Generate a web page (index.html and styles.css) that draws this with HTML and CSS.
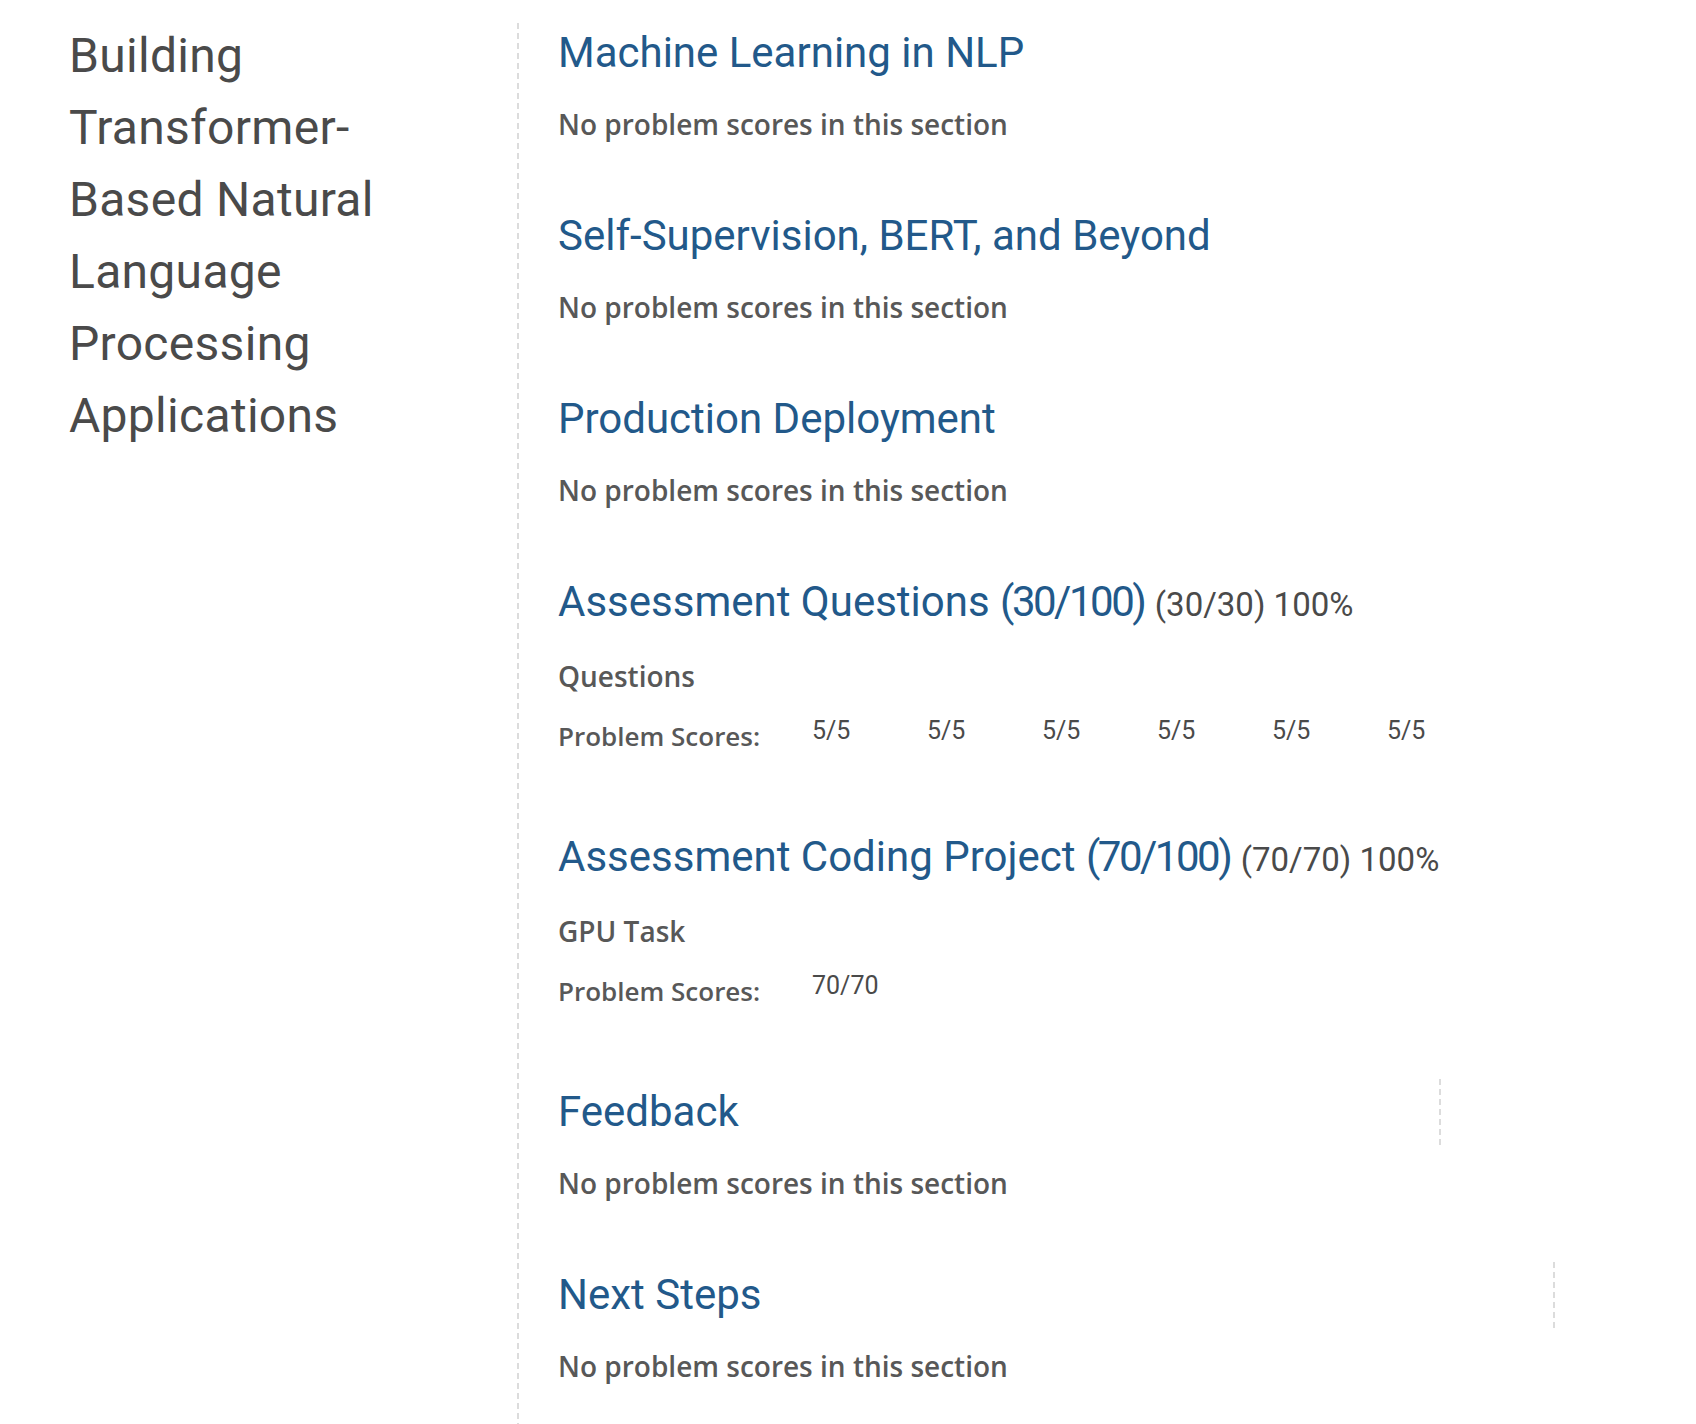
FILE: index.html
```html
<!DOCTYPE html>
<html lang="en">
<head>
<meta charset="utf-8">
<title>Progress</title>
<link rel="stylesheet" href="styles.css">
</head>
<body>
<div class="page">
  <aside class="course">
    <h1 class="course-title">Building Transformer-Based Natural Language Processing Applications</h1>
  </aside>
  <main class="chapters">
    <section class="chapter">
      <h2 class="chapter-title">Machine Learning in NLP</h2>
      <p class="chapter-note">No problem scores in this section</p>
    </section>
    <section class="chapter">
      <h2 class="chapter-title">Self-Supervision, BERT, and Beyond</h2>
      <p class="chapter-note">No problem scores in this section</p>
    </section>
    <section class="chapter">
      <h2 class="chapter-title">Production Deployment</h2>
      <p class="chapter-note">No problem scores in this section</p>
    </section>
    <section class="chapter">
      <h2 class="chapter-title">Assessment Questions <span class="chapter-points">(30/100)</span> <span class="chapter-score">(30/30) 100%</span></h2>
      <p class="chapter-note">Questions</p>
      <div class="scores">
        <span class="scores-label">Problem Scores:</span>
        <span class="score">5/5</span>
        <span class="score">5/5</span>
        <span class="score">5/5</span>
        <span class="score">5/5</span>
        <span class="score">5/5</span>
        <span class="score">5/5</span>
      </div>
    </section>
    <section class="chapter">
      <h2 class="chapter-title">Assessment Coding Project <span class="chapter-points">(70/100)</span> <span class="chapter-score">(70/70) 100%</span></h2>
      <p class="chapter-note">GPU Task</p>
      <div class="scores">
        <span class="scores-label">Problem Scores:</span>
        <span class="score">70/70</span>
      </div>
    </section>
    <section class="chapter">
      <h2 class="chapter-title chapter-title--ruled-a">Feedback</h2>
      <p class="chapter-note">No problem scores in this section</p>
    </section>
    <section class="chapter">
      <h2 class="chapter-title chapter-title--ruled-b">Next Steps</h2>
      <p class="chapter-note">No problem scores in this section</p>
    </section>
  </main>
</div>
</body>
</html>
```
FILE: styles.css
```css
* { box-sizing: border-box; }
html, body { margin: 0; padding: 0; background: #ffffff; }
body { font-family: "Open Sans", "Liberation Sans", sans-serif; }

.page {
  display: flex;
  align-items: stretch;
  min-height: 100vh;
  padding: 20px 0 0 69px;
}

.course {
  width: 448px;
  flex: none;
}

.course-title {
  margin: 0;
  width: 400px;
  font-family: Roboto, "Liberation Sans", sans-serif;
  font-weight: 400;
  font-size: 48px;
  line-height: 72px;
  letter-spacing: 0.3px;
  color: #4a4a4a;
}

.chapters {
  flex: 1;
  padding: 0 0 0 41px;
  background-image: repeating-linear-gradient(to bottom, #dcdcdc 0, #dcdcdc 6px, transparent 6px, transparent 10px);
  background-size: 2px 100%;
  background-repeat: no-repeat;
  background-position: 0 3px;
}

.chapter { margin: 0 0 61px 0; }

.chapter-title {
  margin: 0;
  font-family: Roboto, "Liberation Sans", sans-serif;
  font-weight: 400;
  font-size: 42px;
  line-height: 66px;
  color: #22598a;
}

.chapter-points { letter-spacing: -2.5px; }

.chapter-score {
  font-size: 33px;
  color: #4a4a4a;
}

.chapter-title--ruled-a,
.chapter-title--ruled-b {
  background-image: repeating-linear-gradient(to bottom, #dcdcdc 0, #dcdcdc 6px, transparent 6px, transparent 10px);
  background-size: 2px 100%;
  background-repeat: no-repeat;
  background-position: right top;
}
.chapter-title--ruled-a { width: 883px; }
.chapter-title--ruled-b { width: 997px; }

.chapter-note {
  margin: 20px 0 0 0;
  font-size: 28px;
  line-height: 36px;
  font-weight: 600;
  color: #585858;
}

.scores {
  display: flex;
  align-items: flex-start;
  margin-top: 24px;
  padding-bottom: 9px;
}

.scores-label {
  width: 254px;
  flex: none;
  font-size: 26px;
  line-height: 36px;
  font-weight: 600;
  color: #585858;
}

.score {
  width: 115px;
  flex: none;
  font-family: Roboto, "Liberation Sans", sans-serif;
  font-size: 25px;
  line-height: 25px;
  color: #4a4a4a;
}
```
